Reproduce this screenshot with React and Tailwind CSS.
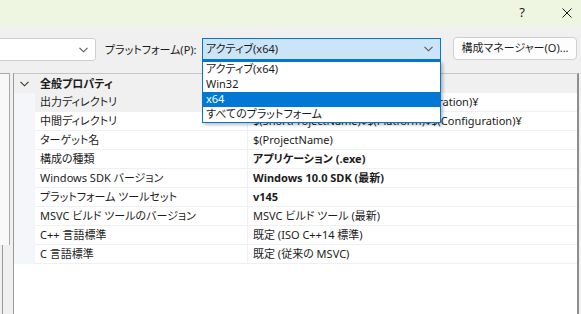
import React from 'react';

const font = "font-['Noto_Sans','Noto_Sans_CJK_JP',sans-serif] [font-feature-settings:'palt']";

const rows = [
  { name: '出力ディレクトリ', value: '$(SolutionDir)$(Platform)¥$(Configuration)¥', selected: true },
  { name: '中間ディレクトリ', value: '$(ShortProjectName)¥$(Platform)¥$(Configuration)¥' },
  { name: 'ターゲット名', value: '$(ProjectName)' },
  { name: '構成の種類', value: 'アプリケーション (.exe)', bold: true },
  { name: 'Windows SDK バージョン', value: 'Windows 10.0 SDK (最新)', bold: true },
  { name: 'プラットフォーム ツールセット', value: 'v145', bold: true },
  { name: 'MSVC ビルド ツールのバージョン', value: 'MSVC ビルド ツール (最新)' },
  { name: 'C++ 言語標準', value: '既定 (ISO C++14 標準)' },
  { name: 'C 言語標準', value: '既定 (従来の MSVC)' },
];

const platforms = ['アクティブ(x64)', 'Win32', 'x64', 'すべてのプラットフォーム'];

const Chevron = ({ className }) => (
  <svg className={className} width="9" height="6" viewBox="0 0 9 6" fill="none">
    <path d="M0.5 0.8 L4.5 4.8 L8.5 0.8" stroke="currentColor" strokeWidth="1.1" />
  </svg>
);

const PropertyRow = ({ row }) => (
  <div className="flex h-[19px]">
    <div className="w-[21px] shrink-0 bg-[#f4f6f9]" />
    <div
      className={`w-[213px] shrink-0 pl-[5px] leading-[18px] border-b border-r border-[#eff0f5] whitespace-nowrap overflow-hidden ${
        row.selected ? 'bg-[#f0f0f0] border-b-[#f0f0f0]' : 'bg-white'
      }`}
    >
      {row.name}
    </div>
    <div
      className={`flex-1 pl-[5px] leading-[18px] border-b border-[#eff0f5] bg-white whitespace-nowrap overflow-hidden ${
        row.bold ? 'font-bold' : ''
      }`}
    >
      {row.value}
    </div>
  </div>
);

export default function App() {
  return (
    <div className={`w-[581px] h-[314px] overflow-hidden relative bg-[#f0f0f0] text-[11px] text-[#1b1b1b] ${font}`}>
      {/* title bar */}
      <div className="h-[25px] bg-[#eef6e2] flex items-center justify-end">
        <span className="text-[13px] mr-[37px] leading-none">?</span>
        <svg className="mr-[9px]" width="10" height="10" viewBox="0 0 10 10">
          <path d="M0.5 0.5 L9.5 9.5 M9.5 0.5 L0.5 9.5" stroke="#1b1b1b" strokeWidth="1" />
        </svg>
      </div>

      {/* toolbar */}
      <div className="h-[48px] flex items-start pt-[13px]">
        <div className="w-[99px] h-[23px] -ml-[3px] bg-white border border-[#cfcfcf] rounded-[3px] flex items-center justify-end pr-[7px] text-[#555]">
          <Chevron />
        </div>
        <span className="ml-[9px] w-[88px] shrink-0 leading-[23px] whitespace-nowrap">プラットフォーム(P):</span>
        <div className="ml-[9px] w-[239px] h-[23px] bg-[#cce4f7] border border-[#0078d4] border-b-2 flex items-center justify-between pl-[3px] pr-[7px]">
          <span>アクティブ(x64)</span>
          <Chevron className="text-[#555]" />
        </div>
        <button className="ml-[12px] -mt-[1px] w-[124px] h-[23px] bg-[#fdfdfd] border border-[#d0d0d0] rounded-[4px] flex items-center justify-center whitespace-nowrap">
          構成マネージャー(O)...
        </button>
      </div>

      {/* panels */}
      <div className="flex h-[241px]">
        <div className="w-[10px] shrink-0 flex flex-col">
          <div className="h-[172px] border-t border-r border-[#a8a8a8] bg-[#f8f8f8]" />
          <div className="flex-1 flex">
            <div className="w-[2px]" />
            <div className="w-[1px] bg-[#9a9a9a]" />
          </div>
        </div>
        <div className="ml-[3px] w-[566px] border-t border-l border-r-2 border-t-[#c4c4c4] border-l-[#9a9a9a] border-r-[#8e8e8e] bg-white flex flex-col">
          <div className="flex h-[19px] bg-[#f0f0f0] items-center">
            <Chevron className="ml-[6px] text-[#333]" />
            <span className="ml-[11px] font-bold leading-[18px]">全般プロパティ</span>
          </div>
          {rows.map((row) => (
            <PropertyRow key={row.name} row={row} />
          ))}
        </div>
      </div>

      {/* open platform list */}
      <div className="absolute left-[202px] top-[61px] w-[239px] border border-[#0078d4] bg-white shadow-[2px_2px_3px_rgba(0,0,0,0.25)]">
        {platforms.map((p) => (
          <div
            key={p}
            className={`h-[15px] leading-[14px] pl-[3px] whitespace-nowrap ${
              p === 'x64' ? 'bg-[#0078d4] text-white' : ''
            }`}
          >
            {p}
          </div>
        ))}
      </div>
    </div>
  );
}
